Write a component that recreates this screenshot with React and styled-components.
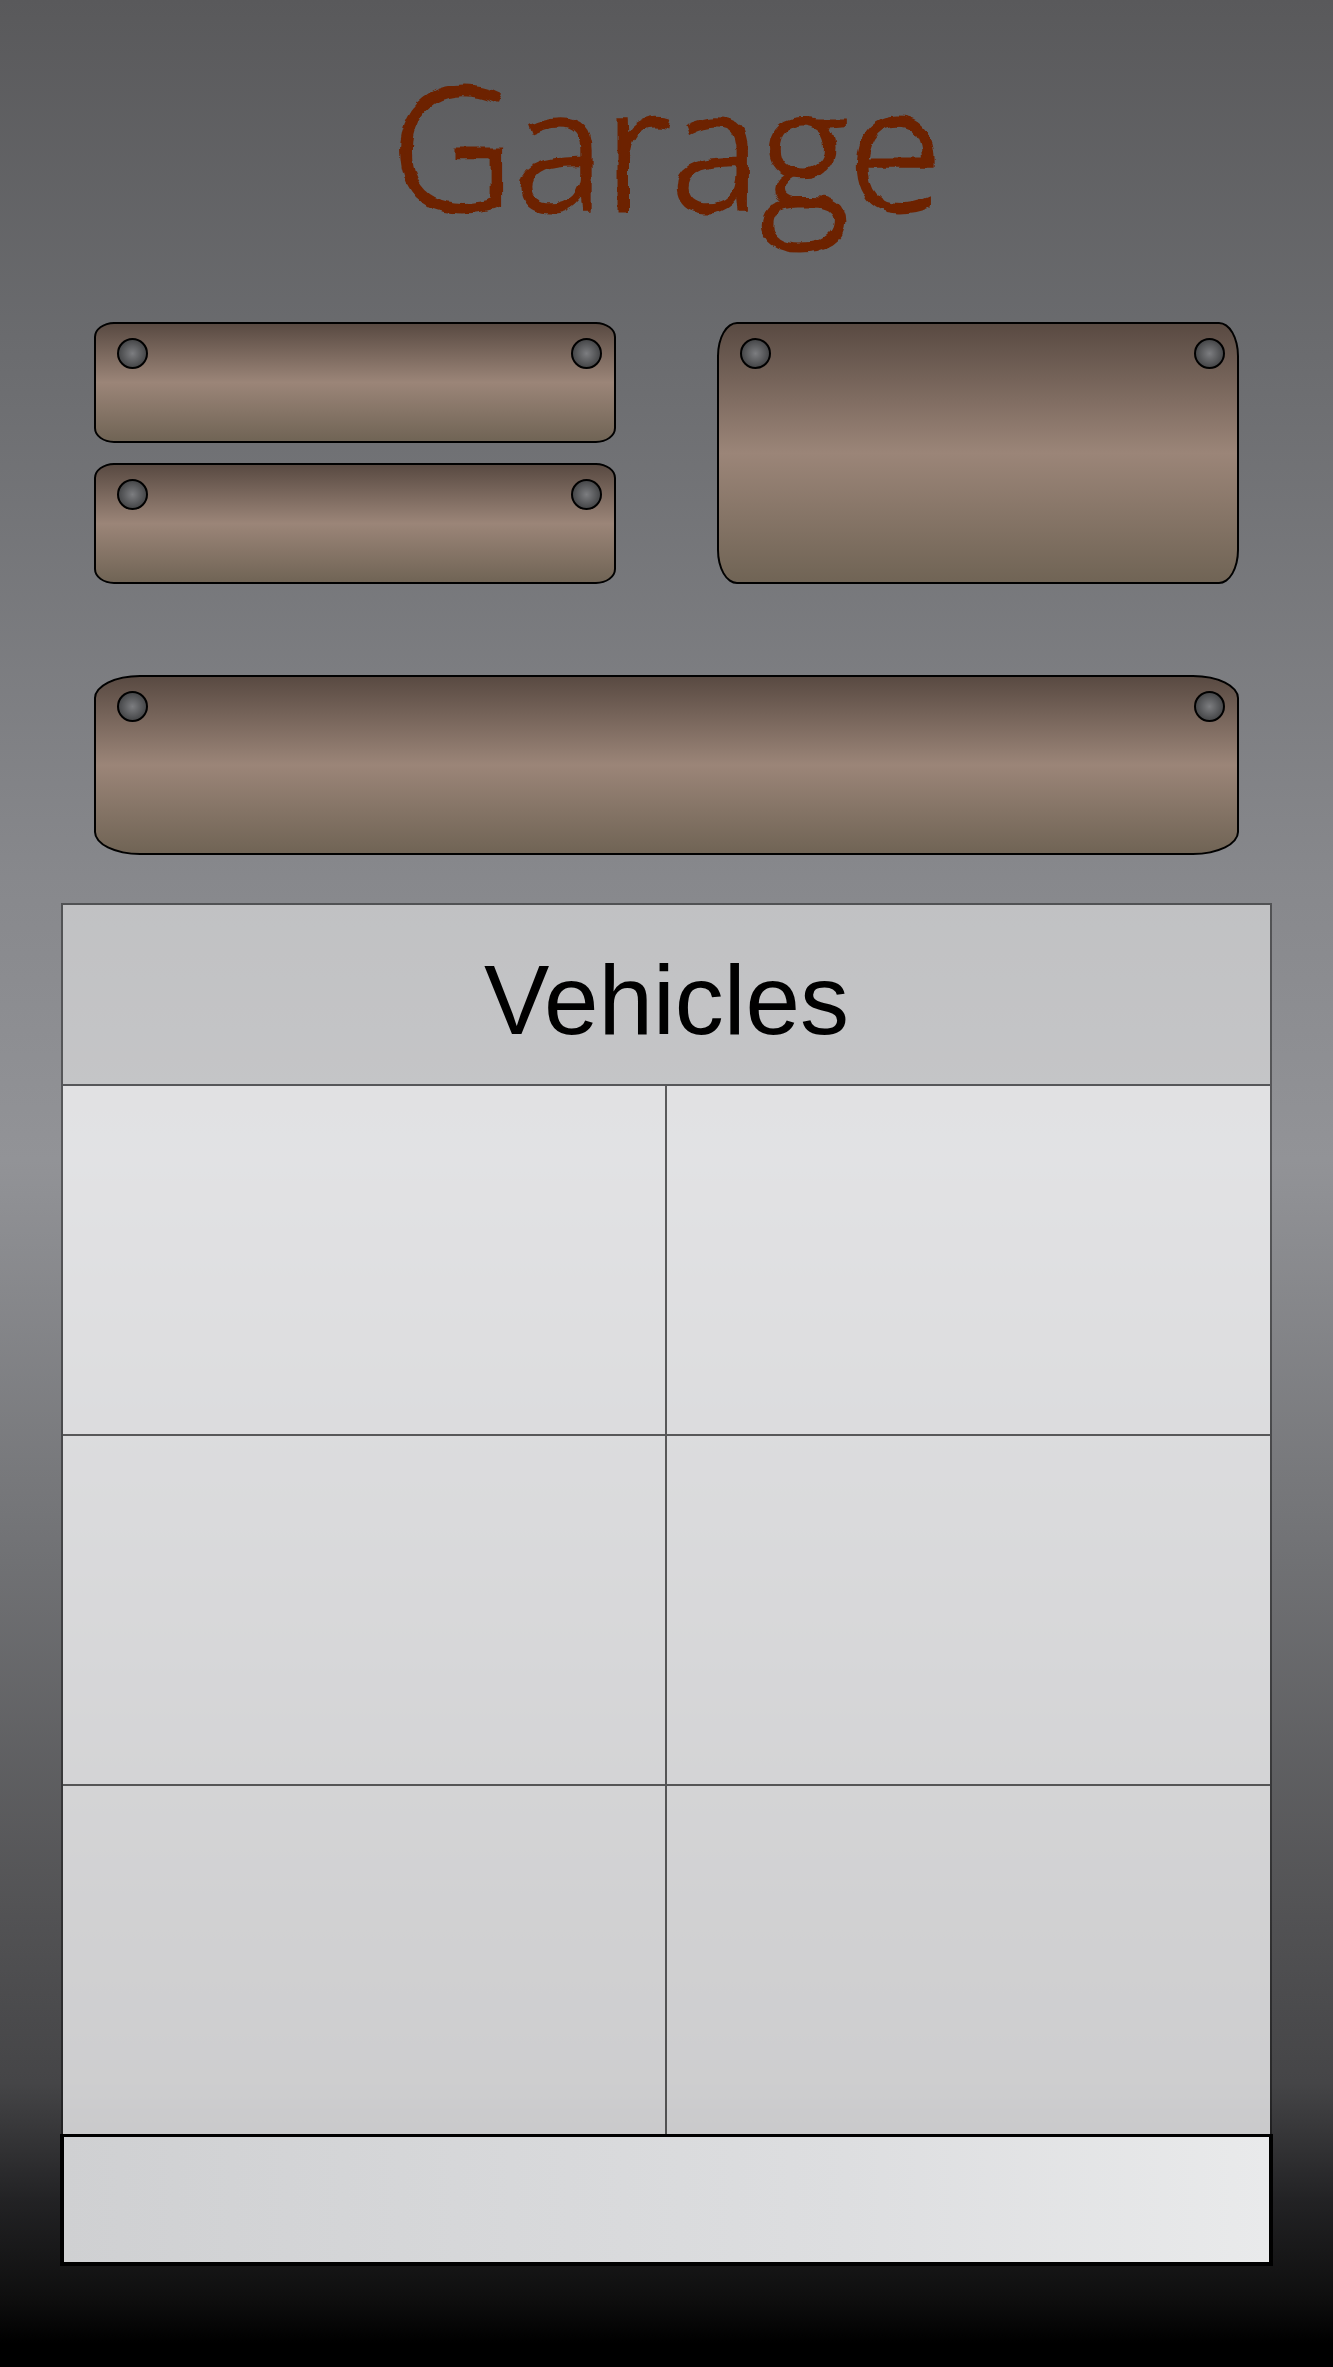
import React from "react";
import styled, { createGlobalStyle } from "styled-components";

const GlobalStyle = createGlobalStyle`
  *, *::before, *::after { box-sizing: border-box; }
  body { margin: 0; background: #000; }
`;

const Page = styled.main`
  display: flex;
  flex-direction: column;
  min-height: 100vh;
  padding: 52px 60px 100px;
  font-family: "Liberation Sans", Arial, sans-serif;
  color: #000;
  background: linear-gradient(
    #59595b 0%,
    #6b6c6f 15%,
    #87888c 37%,
    #929397 49%,
    #727376 65%,
    #525254 81%,
    #454547 88%,
    #222224 93%,
    #0f0f0f 97%,
    #000 99%
  );
`;

const Title = styled.h1`
  margin: 0;
  height: 270px;
  text-align: center;
  font-family: Papyrus, "Open Sans", sans-serif;
  font-size: 170px;
  font-weight: 300;
  line-height: 184px;
  color: #6d2206;
  -webkit-text-stroke: 3px #6d2206;
  filter: url(#rough-edge);
`;

const FilterDefs = styled.svg`
  display: block;
  width: 0;
  height: 0;
`;

const Signs = styled.section`
  display: grid;
  grid-template-columns: 1fr 1fr;
  grid-template-rows: 121px 121px;
  column-gap: 101px;
  row-gap: 20px;
  padding: 0 34px;
`;

const Plate = styled.div`
  display: flex;
  justify-content: space-between;
  align-items: flex-start;
  grid-row: ${(p) => (p.$tall ? "1 / span 2" : "auto")};
  grid-column: ${(p) => (p.$tall ? "2" : "1")};
  padding: 14px 12px 0 21px;
  border: 2px solid #000;
  border-radius: 20px / ${(p) => (p.$tall ? "34px" : "15px")};
  background: linear-gradient(#594a42, #9b8578 50%, #706455);
`;

const WidePlate = styled(Plate)`
  height: 180px;
  margin: 91px 34px 48px;
  border-radius: 46px / 23px;
`;

const Rivet = styled.span`
  width: 31px;
  height: 31px;
  border: 2px solid #000;
  border-radius: 50%;
  background: radial-gradient(circle closest-side, #7c7d80, #47484a);
`;

const Vehicles = styled.table`
  width: calc(100% - 2px);
  margin: 0 1px;
  border-collapse: separate;
  border-spacing: 0;
  table-layout: fixed;
  border: 2px solid rgba(0, 0, 0, 0.4);
  border-width: 2px 2px 0;
`;

const Heading = styled.th`
  height: 181px;
  padding: 10px 0 0;
  font-size: 98px;
  line-height: 116px;
  font-weight: 400;
  background: rgba(255, 255, 255, 0.48);
  border-bottom: 2px solid rgba(0, 0, 0, 0.4);
  background-clip: padding-box;
`;

const Cell = styled.td`
  height: ${(p) => (p.$last ? "348px" : "350px")};
  padding: 0;
  background: rgba(253, 254, 255, 0.74);
  border: 0 solid rgba(0, 0, 0, 0.6);
  border-right-width: ${(p) => (p.$first ? "2px" : "0")};
  border-bottom-width: ${(p) => (p.$last ? "0" : "2px")};
`;

const Footer = styled.footer`
  height: 132px;
  border: 4px solid #000;
  border-top-width: 3px;
  background: linear-gradient(to right, #cfd0d2, #dddee0 65%, #e9eaeb);
`;

function Rivets() {
  return (
    <>
      <Rivet />
      <Rivet />
    </>
  );
}

export default function App() {
  return (
    <>
      <GlobalStyle />
      <Page>
        <FilterDefs aria-hidden="true">
          <filter id="rough-edge" x="-2%" y="-10%" width="104%" height="130%">
            <feTurbulence type="fractalNoise" baseFrequency="0.07" numOctaves="2" seed="4" result="noise" />
            <feDisplacementMap in="SourceGraphic" in2="noise" scale="7" xChannelSelector="R" yChannelSelector="G" />
          </filter>
        </FilterDefs>
        <Title>Garage</Title>
        <Signs>
          <Plate><Rivets /></Plate>
          <Plate $tall><Rivets /></Plate>
          <Plate><Rivets /></Plate>
        </Signs>
        <WidePlate><Rivets /></WidePlate>
        <Vehicles>
          <thead>
            <tr>
              <Heading colSpan={2} scope="colgroup">Vehicles</Heading>
            </tr>
          </thead>
          <tbody>
            {[0, 1, 2].map((row) => (
              <tr key={row}>
                <Cell $first $last={row === 2} />
                <Cell $last={row === 2} />
              </tr>
            ))}
          </tbody>
        </Vehicles>
        <Footer />
      </Page>
    </>
  );
}
